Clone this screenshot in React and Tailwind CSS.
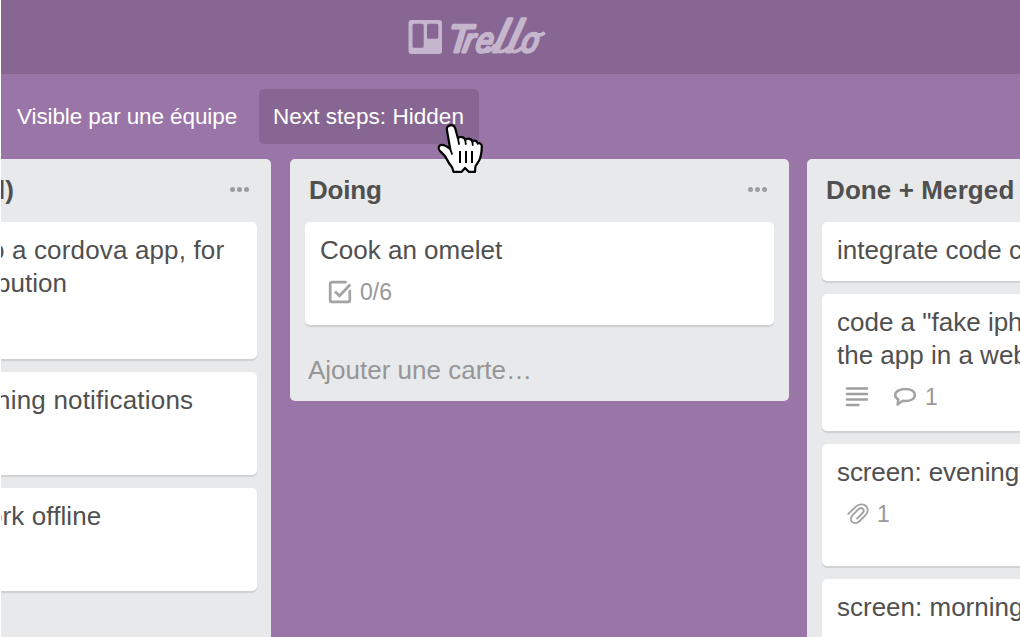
import React from 'react';

function TrelloLogo() {
  return (
    <svg width="140" height="46" viewBox="406 12 140 46" fill="#c5b5cd" aria-label="Trello">
      <path
        fillRule="evenodd"
        d="M411.5 20H439a3 3 0 0 1 3 3v28a3 3 0 0 1-3 3h-27.500a3 3 0 0 1-3-3V23a3 3 0 0 1 3-3zM414 23.800a1.500 1.500 0 0 0-1.500 1.500v21a1.500 1.500 0 0 0 1.500 1.500h8.200a1.500 1.500 0 0 0 1.500-1.500v-21a1.500 1.500 0 0 0-1.500-1.500zM428.500 23.800a1.500 1.500 0 0 0-1.500 1.500v12a1.500 1.500 0 0 0 1.500 1.500h8.300a1.500 1.500 0 0 0 1.500-1.500v-12a1.500 1.500 0 0 0-1.500-1.500z"
      />
      <g
        fontFamily="Liberation Sans, sans-serif"
        fontStyle="italic"
        fontWeight="400"
        stroke="#c5b5cd"
        strokeWidth="2.800"
        strokeLinejoin="round"
      >
        <text transform="translate(446.500 51.500) skewX(-6)" fontSize="39">T</text>
        <text transform="translate(462 51.500) skewX(-10)" fontSize="33">r</text>
        <text transform="translate(474.500 51.500) skewX(-12) scale(.86 1)" fontSize="35">e</text>
        <text transform="translate(492.500 51.500) skewX(-14)" fontSize="46">l</text>
        <text transform="translate(506 51.500) skewX(-14)" fontSize="46">l</text>
        <text transform="translate(520 51.500) skewX(-12) scale(.86 1)" fontSize="35">o</text>
      </g>
      <path d="M498 51q5 2 10-3M511.500 51q5 2 10-3M485 51.500q5 0 10-6M536 34q4 2 7.500-.500" fill="none" stroke="#c5b5cd" strokeWidth="3.600" strokeLinecap="round" />
    </svg>
  );
}

function CheckIcon() {
  return (
    <svg width="24" height="24" viewBox="0 0 24 24" fill="none" stroke="#a3a3a3" strokeWidth="2.700" strokeLinejoin="round" strokeLinecap="round">
      <path d="M17.500 2.200H3.500a1.300 1.300 0 0 0-1.300 1.300v17a1.300 1.300 0 0 0 1.300 1.300h17a1.300 1.300 0 0 0 1.300-1.300V11" />
      <path d="M7 11.500l4.500 4.300L22.300 4.500" strokeLinecap="butt" strokeLinejoin="miter" />
    </svg>
  );
}

function LinesIcon() {
  return (
    <svg width="24" height="22" viewBox="0 0 24 22" stroke="#a0a0a0" strokeWidth="2.600" strokeLinecap="round">
      <path d="M2 2.500h20M2 8h20M2 13.500h20M2 19h11.500" />
    </svg>
  );
}

function CommentIcon() {
  return (
    <svg width="24" height="20" viewBox="0 0 24 20" fill="none" stroke="#a3a3a3" strokeWidth="2.500" strokeLinejoin="round">
      <path d="M12.500 1.900C17.800 1.900 21.800 4.300 21.800 7.900S18 13.900 12.500 13.900c-1 0-1.900-.100-2.700-.200L4.600 17.600 5.300 12.400C3.200 11.200 2.200 9.700 2.200 7.900c0-3.600 4.800-6 10.300-6z" />
    </svg>
  );
}

function ClipIcon() {
  return (
    <svg width="22" height="22" viewBox="0 0 22 22" fill="none" stroke="#a0a0a0" strokeWidth="1.800" strokeLinecap="round" strokeLinejoin="round">
      <path d="M1.300 10.800l6.700-6.500c3.800-3.700 8.500-3.800 11-1.300s2.200 6.500-.500 9.200l-5.700 5.800c-2.400 2.400-5.800 2.700-7.700.900s-1.500-4.800.700-7l5.600-5.500c1.500-1.500 3.400-1.600 4.500-.500s1 2.900-.400 4.300L10 15.600" />
    </svg>
  );
}

function Pointer() {
  return (
    <svg className="absolute left-[436px] top-[123px] z-10" width="48" height="51" viewBox="0 0 48 51">
      <path
        d="M14 2.400c3-.7 4.700.9 5.400 3.600l2.600 9.500c1.500-2.300 6.500-2 7.200 1.500 1.800-2.200 6.700-1.500 7.200 1.700 1.600-1.900 5-.9 5.400 2 1.700-1.200 4 .1 4 3 .1 4-.6 7.500-1.600 11.300-1 3.600-3.600 6-4.800 8.500l-.4 5.300h-6.200l-3.800-3.800-3.300 3.800h-8.300l-1.200-4.300c-2-2.500-4-5-5.500-8.500-1.700-3.500-4-5.500-6.800-8-2.400-2.200-1.300-6.200 1.800-6.200 4 0 6.200 2 8.500 4.200L10.900 7c-.5-2.200.7-4.100 3.100-4.600z"
        fill="#fff"
        stroke="#000"
        strokeWidth="2.200"
        strokeLinejoin="round"
      />
      <path d="M22 15.500l1 5.500M29.200 17l.6 4M36.400 18.700l.3 3.300M14.200 26l1.800 5" stroke="#000" strokeWidth="1.800" strokeLinecap="round" />
      <path d="M24 28v12M30 28V40M36 28v12" stroke="#000" strokeWidth="2" />
    </svg>
  );
}

function Dots() {
  return (
    <span className="-mt-[2px] flex gap-[2px]">
      <i className="size-[5px] rounded-full bg-[#9c9d9e]" />
      <i className="size-[5px] rounded-full bg-[#9c9d9e]" />
      <i className="size-[5px] rounded-full bg-[#9c9d9e]" />
    </span>
  );
}

function Card({ className = '', children }) {
  return (
    <article className={`shrink-0 overflow-hidden whitespace-nowrap bg-white pt-3 text-[26px] leading-[33px] shadow-[0_1.5px_1px_#cfd0d1] ${className}`}>
      {children}
    </article>
  );
}

export default function App() {
  return (
    <div className="relative h-[637px] w-[1020px] overflow-hidden bg-white pl-px font-['Liberation_Sans',Arial,sans-serif] text-[#505050]">
      <div className="flex h-full flex-col overflow-hidden bg-[#9975a8]">
        <header className="flex h-[74px] shrink-0 bg-[#876693] pl-[405px] pt-3">
          <TrelloLogo />
        </header>

        <nav className="flex h-[85px] shrink-0 items-center pb-[1px] pl-4 pt-[1px] text-[22.5px] text-white">
          <span className="w-[242px] whitespace-nowrap tracking-[-0.1px]">Visible par une équipe</span>
          <button className="h-[55px] w-[220px] whitespace-nowrap rounded-[5px] bg-[#876693] pl-[14px] text-left tracking-[0.05px]">
            Next steps: Hidden
          </button>
        </nav>

        <main className="flex min-h-0 flex-1 items-start">
          <section className="flex h-full w-[270px] shrink-0 flex-col overflow-hidden rounded-tr-[5px] bg-[#e8e9eb]">
            <div className="flex h-[63px] shrink-0 items-center justify-between pr-[22px]">
              <h2 className="-ml-[3px] text-[26px] font-bold">l)</h2>
              <Dots />
            </div>
            <div className="flex flex-col gap-[13px] pr-[14px]">
              <Card className="h-[136.5px] rounded-r-[5px]">
                <p className="-ml-[11px] tracking-[0.15px]">o a cordova app, for</p>
                <p className="-ml-[5px]">bution</p>
              </Card>
              <Card className="h-[103.5px] rounded-r-[5px]">
                <p className="-ml-[5px] tracking-[0.2px]">ning notifications</p>
              </Card>
              <Card className="h-[103px] rounded-r-[5px]">
                <p className="-ml-[13px] tracking-[0.1px]">ork offline</p>
              </Card>
            </div>
          </section>

          <section className="ml-[19px] flex h-[242px] w-[499px] shrink-0 flex-col rounded-[5px] bg-[#e8e9eb] px-[15px]">
            <div className="flex h-[63px] shrink-0 items-center justify-between pl-[4px] pr-[7px]">
              <h2 className="text-[26px] font-bold tracking-[-0.2px]">Doing</h2>
              <Dots />
            </div>
            <Card className="h-[103px] rounded-[5px] px-[15px]">
              <p>Cook an omelet</p>
              <div className="flex h-[50px] items-center gap-2 pl-2 text-[23px] text-[#999]">
                <CheckIcon />
                <span>0/6</span>
              </div>
            </Card>
            <a className="mt-[29px] pl-[3px] text-[26px] leading-[33px] text-[#969696]">Ajouter une carte…</a>
          </section>

          <section className="ml-[18px] flex h-full w-[499px] shrink-0 flex-col rounded-t-[5px] bg-[#e8e9eb] px-[15px]">
            <div className="flex h-[63px] shrink-0 items-center pl-[4px]">
              <h2 className="whitespace-nowrap text-[26px] font-bold tracking-[0.1px]">Done + Merged</h2>
            </div>
            <div className="flex flex-col gap-[13px]">
              <Card className="h-[59px] rounded-[5px] pl-[15px]">
                <p>integrate code c</p>
              </Card>
              <Card className="h-[137px] rounded-[5px] pl-[15px]">
                <p>code a "fake iph</p>
                <p>the app in a web</p>
                <div className="flex h-[50px] items-center pl-2 text-[23px] text-[#999]">
                  <LinesIcon />
                  <span className="ml-6 flex items-center gap-2">
                    <CommentIcon />
                    <span>1</span>
                  </span>
                </div>
              </Card>
              <Card className="h-[122px] rounded-[5px] pl-[15px]">
                <p className="tracking-[-0.1px]">screen: evening</p>
                <div className="flex h-[50px] items-center gap-2 pl-[10px] text-[23px] text-[#999]">
                  <ClipIcon />
                  <span>1</span>
                </div>
              </Card>
              <Card className="h-[122px] rounded-[5px] pl-[15px]">
                <p>screen: morning</p>
              </Card>
            </div>
          </section>
        </main>
      </div>
      <Pointer />
    </div>
  );
}
